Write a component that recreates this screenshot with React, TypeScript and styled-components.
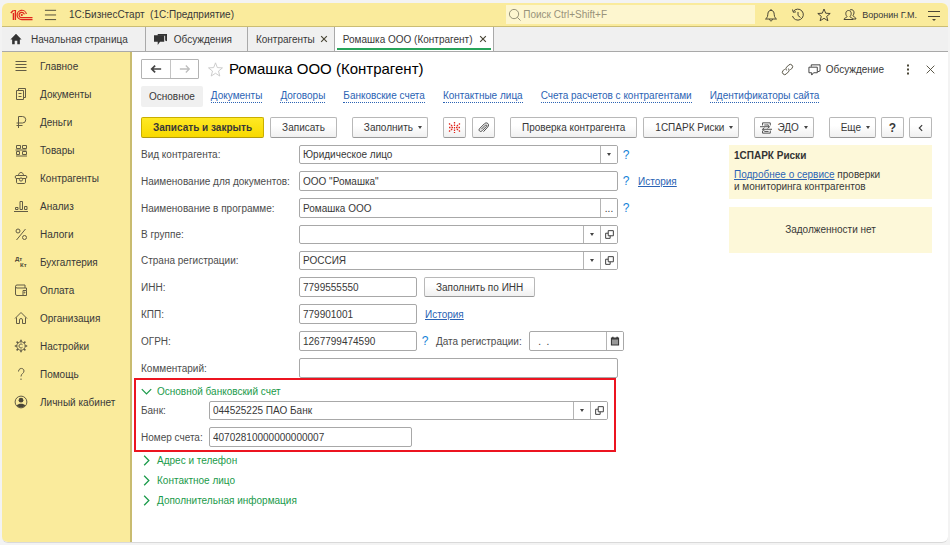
import React, { useState } from "react";
import styled, { createGlobalStyle, css } from "styled-components";

const GlobalStyle = createGlobalStyle`
  * { box-sizing: border-box; }
  html, body { margin: 0; background: #f3f3f3; }
  body, button, input, select {
    font-family: "Liberation Sans", Arial, sans-serif;
    font-size: 10px;
    color: #383838;
  }
  button, input, select { margin: 0; }
  button { cursor: pointer; }
`;

/* ---------- window frame ---------- */

const Page = styled.div`
  display: flex;
  min-height: 100vh;
  padding: 3px 2px 2px;
`;

const Window = styled.div`
  flex: 1;
  display: flex;
  flex-direction: column;
  min-width: 0;
  background: #fff;
  border-bottom: 1px solid #d9d9d9;
  border-radius: 6px;
  overflow: hidden;
`;

const TopBar = styled.header`
  display: flex;
  align-items: center;
  height: 24px;
  padding: 0 7px 0 8px;
  background: #faeb9c;
  border-bottom: 1px solid #cbbd74;
`;

const AppTitle = styled.span`
  margin-left: 12px;
  white-space: pre;
`;

const IconButton = styled.button<{ $gap?: number }>`
  display: inline-flex;
  align-items: center;
  justify-content: center;
  padding: 0;
  margin-left: ${(p) => p.$gap ?? 0}px;
  border: 0;
  background: none;
  color: #4a4636;
`;

const Search = styled.label`
  display: flex;
  align-items: center;
  gap: 2px;
  width: 249px;
  height: 19px;
  margin-left: auto;
  padding-left: 2px;
  background: #fdf6cf;
  color: #8f8a70;
  input {
    flex: 1;
    min-width: 0;
    padding: 0;
    border: 0;
    outline: 0;
    background: none;
  }
  input::placeholder { color: #99937a; opacity: 1; }
`;

const UserName = styled.span`
  margin-left: 5px;
  font-size: 9px;
`;

const TabBar = styled.nav`
  display: flex;
  height: 25px;
  background: #f0f0f0;
  border-bottom: 1px solid #a9a9a9;
`;

const Tab = styled.div<{ $active?: boolean }>`
  position: relative;
  display: flex;
  align-items: center;
  padding: 0 6px 0 8px;
  border-right: 1px solid #a9a9a9;
  background: ${(p) => (p.$active ? "#fff" : "transparent")};
  ${(p) =>
    p.$active &&
    css`
      &::after {
        content: "";
        position: absolute;
        left: 2px;
        right: 2px;
        bottom: 1px;
        height: 2px;
        background: #27a45a;
      }
    `}
`;

const TabLabel = styled.button<{ $gap?: number; $end?: number }>`
  display: flex;
  align-items: center;
  gap: ${(p) => p.$gap ?? 0}px;
  padding: 0 ${(p) => p.$end ?? 0}px 0 0;
  border: 0;
  background: none;
  white-space: nowrap;
`;

const Body = styled.div`
  flex: 1;
  display: flex;
  min-height: 0;
`;

/* ---------- sidebar ---------- */

const Sidebar = styled.nav`
  flex: none;
  width: 130px;
  background: #faeb9c;
  border-right: 2px solid #c9bc70;
`;

const MenuItem = styled.button`
  display: grid;
  grid-template-columns: 14px 1fr;
  column-gap: 12px;
  align-items: center;
  width: 100%;
  height: 28px;
  padding: 0 0 0 12px;
  border: 0;
  background: none;
  text-align: left;
  white-space: nowrap;
  svg { color: #625c45; }
`;

/* ---------- main area ---------- */

const Main = styled.main`
  flex: 1;
  min-width: 0;
  padding: 7px 16px 8px 9px;
`;

const TitleRow = styled.div`
  display: flex;
  align-items: center;
  height: 20px;
  margin-right: -3px;
`;

const HistoryButtons = styled.div`
  display: flex;
  height: 20px;
  border: 1px solid #b3b3b3;
  border-radius: 1px;
  button {
    display: flex;
    align-items: center;
    justify-content: center;
    width: 28px;
    padding: 0;
    border: 0;
    background: #fff;
    color: #444;
  }
  button + button {
    border-left: 1px solid #c4c4c4;
    color: #bdbdbd;
  }
`;

const Title = styled.h1`
  margin: 0 auto 0 6px;
  font-size: 15px;
  line-height: 18px;
  font-weight: 400;
  color: #000;
  white-space: nowrap;
`;

const DiscussButton = styled.button`
  display: flex;
  align-items: center;
  gap: 5px;
  margin-left: 14px;
  padding: 0;
  border: 0;
  background: none;
`;

const Sections = styled.nav`
  display: flex;
  align-items: center;
  gap: 18px;
  height: 22px;
  margin-top: 6px;
  white-space: nowrap;
`;

const CurrentSection = styled.span`
  padding: 0 8px;
  margin-right: -10px;
  line-height: 21px;
  background: #f0f0f0;
  border-radius: 2px;
`;

const SectionLink = styled.a`
  line-height: 12px;
  color: #2b63b4;
  text-decoration: none;
  border-bottom: 1px dotted #2b63b4;
`;

const Toolbar = styled.div`
  display: flex;
  gap: 6px;
  margin-top: 10px;
`;

const ToolGroup = styled.div<{ $end?: boolean; $last?: boolean }>`
  display: flex;
  gap: ${(p) => (p.$end ? 5 : 6)}px;
  margin-right: ${(p) => (p.$last || p.$end ? 0 : 9)}px;
  margin-left: ${(p) => (p.$end ? "auto" : "0")};
`;

const Button = styled.button<{ $primary?: boolean; $square?: boolean; $menu?: boolean; $icon?: boolean }>`
  display: inline-flex;
  align-items: center;
  justify-content: center;
  gap: 5px;
  height: 21px;
  ${(p) => (p.$square ? "width: 23px;" : "")}
  padding: 0 ${(p) => (p.$square ? 0 : p.$menu ? 5 : 11)}px 0 ${(p) => (p.$square ? 0 : p.$icon ? 5 : 11)}px;
  border: 1px solid ${(p) => (p.$primary ? "#c9ae00" : "#b8b8b8")};
  border-bottom-color: ${(p) => (p.$primary ? "#b09a10" : "#999")};
  border-radius: 2px;
  background: ${(p) =>
    p.$primary ? "linear-gradient(#ffe924, #f8d900)" : "linear-gradient(#fff 40%, #f0f0f0)"};
  font-weight: ${(p) => (p.$primary ? 700 : 400)};
  white-space: nowrap;
  b { font-size: 12px; }
`;

const Caret = styled.i`
  width: 0;
  height: 0;
  border: 2px solid transparent;
  border-top: 3px solid #444;
  border-bottom: 0;
`;

const Content = styled.div`
  display: flex;
  align-items: flex-start;
  justify-content: space-between;
  gap: 16px;
  margin-top: 7px;
`;

const Form = styled.form`
  flex: 0 1 560px;
  min-width: 0;
`;

const Fields = styled.div`
  display: flex;
  flex-direction: column;
  gap: 7px;
`;

const Row = styled.div`
  display: flex;
  align-items: center;
`;

const Label = styled.label<{ $short?: boolean }>`
  flex: none;
  width: ${(p) => (p.$short ? 68 : 158)}px;
  color: #4c4c4c;
  white-space: nowrap;
`;

const widths = { full: 319, small: 118, bank: 399, account: 203, date: 95 };

const Field = styled.div<{ $size: keyof typeof widths; $select?: boolean }>`
  display: flex;
  flex: 0 1 ${(p) => widths[p.$size]}px;
  min-width: 0;
  height: ${(p) => (p.$select ? 19 : 20)}px;
  border: 1px solid #a8a8a8;
  border-radius: 2px;
  background: #fff;
  overflow: hidden;
  input,
  select {
    flex: 1;
    min-width: 0;
    padding: 0 3px;
    border: 0;
    outline: 0;
    appearance: none;
    background: none;
  }
  button {
    display: flex;
    align-items: center;
    justify-content: center;
    flex: none;
    width: 17px;
    padding: 0;
    border: 0;
    border-left: 1px solid #b4b4b4;
    background: #fff;
  }
`;

const Help = styled.button`
  width: 8px;
  margin-left: 4px;
  padding: 0;
  border: 0;
  background: none;
  font-size: 12px;
  line-height: 14px;
  color: #1583d8;
`;

const Link = styled.a<{ $gap?: number }>`
  margin-left: ${(p) => p.$gap ?? 0}px;
  color: #2b63b4;
`;

const FillButton = styled(Button)`
  height: 20px;
  margin-left: 7px;
`;

const DateLabel = styled.label`
  margin: 0 7px;
  color: #4c4c4c;
  white-space: nowrap;
`;

const Highlight = styled.section`
  width: 482px;
  max-width: 100%;
  margin: 0 0 0 -7px;
  padding: 3px 5px;
  border: 2px solid #ec1420;
`;

const GroupToggle = styled.button`
  display: grid;
  grid-template-columns: 12px auto;
  column-gap: 4px;
  align-items: center;
  height: 16px;
  padding: 0;
  border: 0;
  background: none;
  color: #1a9a4a;
`;

const Groups = styled.div`
  display: flex;
  flex-direction: column;
  align-items: flex-start;
  gap: 4px;
`;

const BankFields = styled(Fields)`
  margin-top: 2px;
`;

const Panels = styled.aside`
  display: flex;
  flex-direction: column;
  gap: 8px;
  flex: 0 0 203px;
`;

const Panel = styled.div<{ $centered?: boolean }>`
  padding: 4px 5px 6px;
  background: #fdf8d9;
  line-height: 12px;
  h2 {
    margin: 0 0 7px;
    font-size: 10px;
    line-height: 13px;
    color: #333;
  }
  p { margin: 0; }
  ${(p) =>
    p.$centered &&
    css`
      padding: 17px 5px;
      text-align: center;
    `}
`;

/* ---------- icons ---------- */

type IconProps = { size?: number; children: React.ReactNode; w?: number };
const Icon = ({ size = 14, w = 1, children }: IconProps) => (
  <svg
    width={size}
    height={size}
    viewBox="0 0 14 14"
    fill="none"
    stroke="currentColor"
    strokeWidth={w}
    aria-hidden="true"
  >
    {children}
  </svg>
);

const Logo = () => (
  <svg width="23" height="12" viewBox="0 0 23 12" fill="none" stroke="#e0261c" strokeWidth="1.2" aria-label="1С">
    <path d="M.8 3.9 3.400 1.500M5.400 1v10M3.400 11V4" strokeWidth="1.4" />
    <path d="M3.400 1.500h2" />
    <path d="M16.400 5A4.700 4.700 0 1 0 11.800 10.700H22.500" />
    <path d="M14.400 5.400A2.700 2.700 0 1 0 11.800 8.700H22.500" />
    <circle cx="11.8" cy="6" r="0.5" />
  </svg>
);

const MenuLines = () => (
  <Icon size={13}>
    <path d="M1 2.5h12M1 7.5h12M1 12.5h12" />
  </Icon>
);

const CloseX = () => (
  <Icon size={8} w={2}>
    <path d="M2 2l10 10M12 2L2 12" />
  </Icon>
);

const OpenIcon = () => (
  <Icon size={9} w={1.5}>
    <path d="M5 1h8v8H5zM5 5H1v8h7V9" />
  </Icon>
);

const Chevron = ({ down }: { down?: boolean }) => (
  <Icon size={11} w={1.6}>
    <path d={down ? "M1 4l6 6 6-6" : "M4 1l6 6-6 6"} />
  </Icon>
);

const menu: { label: string; icon: React.ReactNode }[] = [
  { label: "Главное", icon: <Icon><path d="M1.5 2.5h11M1.5 5.5h11M1.5 8.5h11M1.5 11.5h11" /></Icon> },
  {
    label: "Документы",
    icon: <Icon><path d="M2.5 3.5h7v9h-7zM4.5 3.5v-2h7v9h-2M4.5 6.5h3M4.5 9.5h3" /></Icon>,
  },
  { label: "Деньги", icon: <Icon><path d="M4.5 13V1.5h4a3 3 0 0 1 0 6.5H2.5M2.5 10.5h6" /></Icon> },
  {
    label: "Товары",
    icon: (
      <Icon>
        <path d="M2.5 2.5h4v3h-4zM8.5 2.5h4v3h-4zM2.5 8.5h3v3h-3zM8.5 8.5h4v3h-4zM1.5 7h11M2 13h11" />
      </Icon>
    ),
  },
  {
    label: "Контрагенты",
    icon: (
      <Icon>
        <path d="M4.5 4.500c0-4 5-4 5 0M2 4.500h10c1 0 1 3 0 3H2c-1 0-1-3 0-3zM2.500 7.500V11c0 1 .5 1.500 1.500 1.500h6c1 0 1.500-.5 1.500-1.500V7.500" />
        <circle cx="7" cy="8.5" r="1.6" fill="#faeb9c" />
      </Icon>
    ),
  },
  {
    label: "Анализ",
    icon: <Icon><path d="M0 12.5h14M1.5 10.5v-2H4v2zM6 10.5v-8h2.5v8zM10.5 10.5v-3H13v3z" /></Icon>,
  },
  {
    label: "Налоги",
    icon: <Icon><circle cx="4" cy="4" r="2" /><circle cx="10.5" cy="10.5" r="2" /><path d="M11.5 2l-9 11" /></Icon>,
  },
  {
    label: "Бухгалтерия",
    icon: (
      <svg width="14" height="14" viewBox="0 0 14 14" fill="#4a4636" fontSize="6" fontWeight="700" aria-hidden="true">
        <text x="1" y="6">Дт</text>
        <text x="6" y="12">Кт</text>
      </svg>
    ),
  },
  {
    label: "Оплата",
    icon: (
      <Icon>
        <path d="M12.5 7.5V5H3a1.5 1.5 0 0 1 0-3h8v3M1.5 3.5V11A1.5 1.5 0 0 0 3 12.5h9.5v-5H9v5" />
        <circle cx="10.5" cy="9.5" r="0.5" />
      </Icon>
    ),
  },
  {
    label: "Организация",
    icon: <Icon><path d="M1 7.5l6-6 6 6M2.5 6.5v6h3V9a1.5 1.5 0 0 1 3 0v3.5h3v-6" /></Icon>,
  },
  {
    label: "Настройки",
    icon: (
      <Icon>
        <circle cx="7" cy="7" r="4.2" />
        <path d="M8.5 5.7a2 2 0 1 0 0 2.6" />
        <path
          strokeWidth="1.6"
          d="M7 .8v2M7 11.2v2M.8 7h2M11.2 7h2M2.6 2.6L4 4M10 10l1.4 1.4M2.6 11.4L4 10M10 4l1.4-1.4"
        />
      </Icon>
    ),
  },
  {
    label: "Помощь",
    icon: <Icon><path d="M4.5 4.5c0-4 5.5-4 5.5-.5C10 6.5 7 6.5 7 9.5M7 11.5V13" /></Icon>,
  },
  {
    label: "Личный кабинет",
    icon: (
      <Icon>
        <circle cx="7" cy="7" r="5.9" />
        <g fill="#4a4636" stroke="none">
          <circle cx="7" cy="5.2" r="2.4" />
          <path d="M2.8 10.6c1-2.6 7.4-2.6 8.4 0-2 2.6-6.4 2.6-8.4 0z" />
        </g>
      </Icon>
    ),
  },
];

const sectionLinks = [
  "Документы",
  "Договоры",
  "Банковские счета",
  "Контактные лица",
  "Счета расчетов с контрагентами",
  "Идентификаторы сайта",
];

/* ---------- form parts ---------- */

type InputFieldProps = {
  id: string;
  value: string;
  size: keyof typeof widths;
  select?: boolean;
  children?: React.ReactNode;
};

const InputField = ({ id, value, size, select, children }: InputFieldProps) => {
  const [text, setText] = useState(value);
  return (
    <Field $size={size} $select={select}>
      <input id={id} type="text" value={text} onChange={(e) => setText(e.target.value)} />
      {children}
    </Field>
  );
};

const PickerButtons = () => (
  <>
    <button type="button" aria-label="Выбрать"><Caret /></button>
    <button type="button" aria-label="Открыть"><OpenIcon /></button>
  </>
);

export default function App() {
  return (
    <>
      <GlobalStyle />
      <Page>
        <Window>
          <TopBar>
            <Logo />
            <IconButton $gap={11} aria-label="Меню"><MenuLines /></IconButton>
            <AppTitle>1С:БизнесСтарт  (1С:Предприятие)</AppTitle>
            <Search>
              <Icon size={13}><circle cx="6.5" cy="6.5" r="5" /><path d="M10 10l3.5 3.5" /></Icon>
              <input type="search" placeholder="Поиск Ctrl+Shift+F" aria-label="Поиск" />
            </Search>
            <IconButton $gap={9} aria-label="Уведомления">
              <Icon>
                <path d="M1.5 11C4 9.500 3.500 7.500 4 5c.5-3.500 5.500-3.500 6 0 .5 2.500 0 4.500 2.500 6zM5.500 11c0 2.500 3 2.500 3 0M7 1v1.500" />
              </Icon>
            </IconButton>
            <IconButton $gap={13} aria-label="История">
              <Icon><path d="M2.300 3.500A5.500 5.500 0 1 1 1.500 8M1.500 1.500l.8 2.800 2.700-.5M7 4v3.500l2.500 2" /></Icon>
            </IconButton>
            <IconButton $gap={12} aria-label="Избранное">
              <Icon><path d="M7 1l1.700 4.200 4.500.3-3.500 2.900 1.200 4.400L7 10.300l-3.900 2.500 1.200-4.400L.8 5.500l4.500-.3z" /></Icon>
            </IconButton>
            <IconButton $gap={12} aria-label="Пользователи">
              <Icon>
                <path d="M1 11.500c0-2 3-1.500 3-3-2-2-1.500-6 1.500-6s3.500 4 1.500 6c0 1.500 3 1 3 3zM7 2c3-1.500 5.500 2 3 5.500 0 1.500 3 1.500 3 3.500h-3" />
              </Icon>
            </IconButton>
            <UserName>Воронин Г.М.</UserName>
            <IconButton $gap={10} aria-label="Настройка окна">
              <Icon><path d="M1 3.5h12M1 8.5h12" /><path d="M5 11h4l-2 2z" fill="currentColor" stroke="none" /></Icon>
            </IconButton>
          </TopBar>

          <TabBar>
            <Tab>
              <TabLabel $gap={9} $end={11}>
                <Icon size={12}>
                  <path d="M7 1L.5 7.5h2V13h3V9h3v4h3V7.5h2z" fill="#333" stroke="none" />
                </Icon>
                Начальная страница
              </TabLabel>
            </Tab>
            <Tab>
              <TabLabel $gap={7} $end={9}>
                <Icon size={13}>
                  <path d="M4 1h10v8l-2-1V3H4z" fill="#333" stroke="none" />
                  <path d="M0 2.5h11v7H6.5L4 13V9.5H0z" fill="#333" stroke="none" />
                </Icon>
                Обсуждения
              </TabLabel>
            </Tab>
            <Tab>
              <TabLabel $end={5}>Контрагенты</TabLabel>
              <IconButton aria-label="Закрыть вкладку"><CloseX /></IconButton>
            </Tab>
            <Tab $active>
              <TabLabel $end={7}>Ромашка ООО (Контрагент)</TabLabel>
              <IconButton aria-label="Закрыть вкладку"><CloseX /></IconButton>
            </Tab>
          </TabBar>

          <Body>
            <Sidebar>
              {menu.map((m) => (
                <MenuItem key={m.label}>
                  {m.icon}
                  {m.label}
                </MenuItem>
              ))}
            </Sidebar>

            <Main>
              <TitleRow>
                <HistoryButtons>
                  <button aria-label="Назад">
                    <Icon size={12} w={2}><path d="M2 7h11M6 3L2 7l4 4" /></Icon>
                  </button>
                  <button aria-label="Вперед">
                    <Icon size={12} w={1.5}><path d="M1 7h11M8 3l4 4-4 4" /></Icon>
                  </button>
                </HistoryButtons>
                <IconButton $gap={9} aria-label="В избранное">
                  <svg width="15" height="15" viewBox="0 0 14 14" fill="none" stroke="#c4c4c4" strokeWidth="0.8">
                    <path d="M7 .8l1.7 4.400 4.800.3-3.700 3 1.200 4.600L7 10.500l-4 2.600 1.200-4.600-3.700-3 4.800-.3z" />
                  </svg>
                </IconButton>
                <Title>Ромашка ООО (Контрагент)</Title>
                <IconButton aria-label="Получить ссылку">
                  <Icon size={13}>
                    <path d="M6 8a2.500 2.500 0 0 1 0-3.500L8.500 2A2.500 2.500 0 0 1 12 5.500L10 7.500M8 6a2.500 2.500 0 0 1 0 3.500L5.500 12A2.500 2.500 0 0 1 2 8.500L4 6.500" />
                  </Icon>
                </IconButton>
                <DiscussButton>
                  <Icon size={13}><path d="M1 4.5h9v6H6L4 13v-2.500H1zM3.500 4V2H13v6.500l-2.500 1" /></Icon>
                  Обсуждение
                </DiscussButton>
                <IconButton $gap={17} aria-label="Еще">
                  <Icon><path d="M7 2.5v2M7 6.5v2M7 10.5v2" strokeWidth="2" /></Icon>
                </IconButton>
                <IconButton $gap={11} aria-label="Закрыть">
                  <Icon size={9} w={1.4}><path d="M1 1l12 12M13 1L1 13" /></Icon>
                </IconButton>
              </TitleRow>

              <Sections>
                <CurrentSection>Основное</CurrentSection>
                {sectionLinks.map((s) => (
                  <SectionLink key={s} href="#">{s}</SectionLink>
                ))}
              </Sections>

              <Toolbar>
                <ToolGroup>
                  <Button $primary>Записать и закрыть</Button>
                  <Button>Записать</Button>
                </ToolGroup>
                <ToolGroup>
                  <Button $menu>Заполнить<Caret /></Button>
                </ToolGroup>
                <ToolGroup>
                  <Button $square aria-label="1СПАРК">
                    <svg width="13" height="13" viewBox="0 0 13 13" stroke="#e0261c" strokeWidth="1.3" strokeDasharray="1.5 1" aria-hidden="true">
                      <path d="M6.5 1v11M1 2.5l4 3M12 2.5l-4 3M1 10.5l4-3M12 10.5l-4-3M1 6.5h4M12 6.5H8" />
                    </svg>
                  </Button>
                  <Button $square aria-label="Присоединенные файлы">
                    <Icon size={13}>
                      <path d="M4.5 9L9 4.500c1-1 2 .2 1.200 1.200L5.500 10.500C3.500 12.500 1 10 3 8l5-5c2.500-2.500 6 .5 3.500 3.500L7 11.500" />
                    </Icon>
                  </Button>
                </ToolGroup>
                <ToolGroup>
                  <Button>Проверка контрагента</Button>
                  <Button $menu>1СПАРК Риски<Caret /></Button>
                </ToolGroup>
                <ToolGroup $last>
                  <Button $menu $icon>
                    <Icon size={12}>
                      <path d="M3 4V1h9v3M3 10v3h9v-3M5 3.5h5M5 11h5M0 5.5h11M9 3.5l2 2-2 2M14 8.5H3M5 6.5l-2 2 2 2" />
                    </Icon>
                    ЭДО<Caret />
                  </Button>
                </ToolGroup>
                <ToolGroup $end>
                  <Button $menu>Еще<Caret /></Button>
                  <Button $square aria-label="Справка"><b>?</b></Button>
                  <Button $square aria-label="Свернуть">
                    <Icon size={8} w={2}><path d="M9 2L4 7l5 5" /></Icon>
                  </Button>
                </ToolGroup>
              </Toolbar>

              <Content>
                <Form onSubmit={(e) => e.preventDefault()}>
                  <Fields>
                    <Row>
                      <Label htmlFor="kind">Вид контрагента:</Label>
                      <Field $size="full" $select>
                        <select id="kind" defaultValue="Юридическое лицо">
                          <option>Юридическое лицо</option>
                          <option>Физическое лицо</option>
                        </select>
                        <button type="button" aria-label="Выбрать"><Caret /></button>
                      </Field>
                      <Help type="button">?</Help>
                    </Row>
                    <Row>
                      <Label htmlFor="docName">Наименование для документов:</Label>
                      <InputField id="docName" size="full" value={'ООО "Ромашка"'} />
                      <Help type="button">?</Help>
                      <Link href="#" $gap={8}>История</Link>
                    </Row>
                    <Row>
                      <Label htmlFor="name">Наименование в программе:</Label>
                      <InputField id="name" size="full" value="Ромашка ООО">
                        <button type="button" aria-label="Изменить">...</button>
                      </InputField>
                      <Help type="button">?</Help>
                    </Row>
                    <Row>
                      <Label htmlFor="group">В группе:</Label>
                      <InputField id="group" size="full" select value=""><PickerButtons /></InputField>
                    </Row>
                    <Row>
                      <Label htmlFor="country">Страна регистрации:</Label>
                      <InputField id="country" size="full" select value="РОССИЯ"><PickerButtons /></InputField>
                    </Row>
                    <Row>
                      <Label htmlFor="inn">ИНН:</Label>
                      <InputField id="inn" size="small" value="7799555550" />
                      <FillButton type="button">Заполнить по ИНН</FillButton>
                    </Row>
                    <Row>
                      <Label htmlFor="kpp">КПП:</Label>
                      <InputField id="kpp" size="small" value="779901001" />
                      <Link href="#" $gap={8}>История</Link>
                    </Row>
                    <Row>
                      <Label htmlFor="ogrn">ОГРН:</Label>
                      <InputField id="ogrn" size="small" value="1267799474590" />
                      <Help type="button">?</Help>
                      <DateLabel htmlFor="regDate">Дата регистрации:</DateLabel>
                      <InputField id="regDate" size="date" value="  .  .">
                        <button type="button" aria-label="Календарь">
                          <Icon size={10} w={1.5}>
                            <path d="M2 3h10v9.5H2z" fill="#999" />
                            <path d="M2 4h10M4 1v3M10 1v3" strokeWidth="2" />
                          </Icon>
                        </button>
                      </InputField>
                    </Row>
                    <Row>
                      <Label htmlFor="comment">Комментарий:</Label>
                      <InputField id="comment" size="full" value="" />
                    </Row>
                  </Fields>

                  <Highlight>
                    <GroupToggle type="button" aria-expanded="true">
                      <Chevron down />
                      Основной банковский счет
                    </GroupToggle>
                    <BankFields>
                      <Row>
                        <Label $short htmlFor="bank">Банк:</Label>
                        <InputField id="bank" size="bank" select value="044525225 ПАО Банк"><PickerButtons /></InputField>
                      </Row>
                      <Row>
                        <Label $short htmlFor="account">Номер счета:</Label>
                        <InputField id="account" size="account" value="40702810000000000007" />
                      </Row>
                    </BankFields>
                  </Highlight>
                  <Groups>
                    <GroupToggle type="button"><Chevron />Адрес и телефон</GroupToggle>
                    <GroupToggle type="button"><Chevron />Контактное лицо</GroupToggle>
                    <GroupToggle type="button"><Chevron />Дополнительная информация</GroupToggle>
                  </Groups>
                </Form>

                <Panels>
                  <Panel>
                    <h2>1СПАРК Риски</h2>
                    <p>
                      <Link href="#">Подробнее о сервисе</Link> проверки
                      <br />и мониторинга контрагентов
                    </p>
                  </Panel>
                  <Panel $centered>Задолженности нет</Panel>
                </Panels>
              </Content>
            </Main>
          </Body>
        </Window>
      </Page>
    </>
  );
}
